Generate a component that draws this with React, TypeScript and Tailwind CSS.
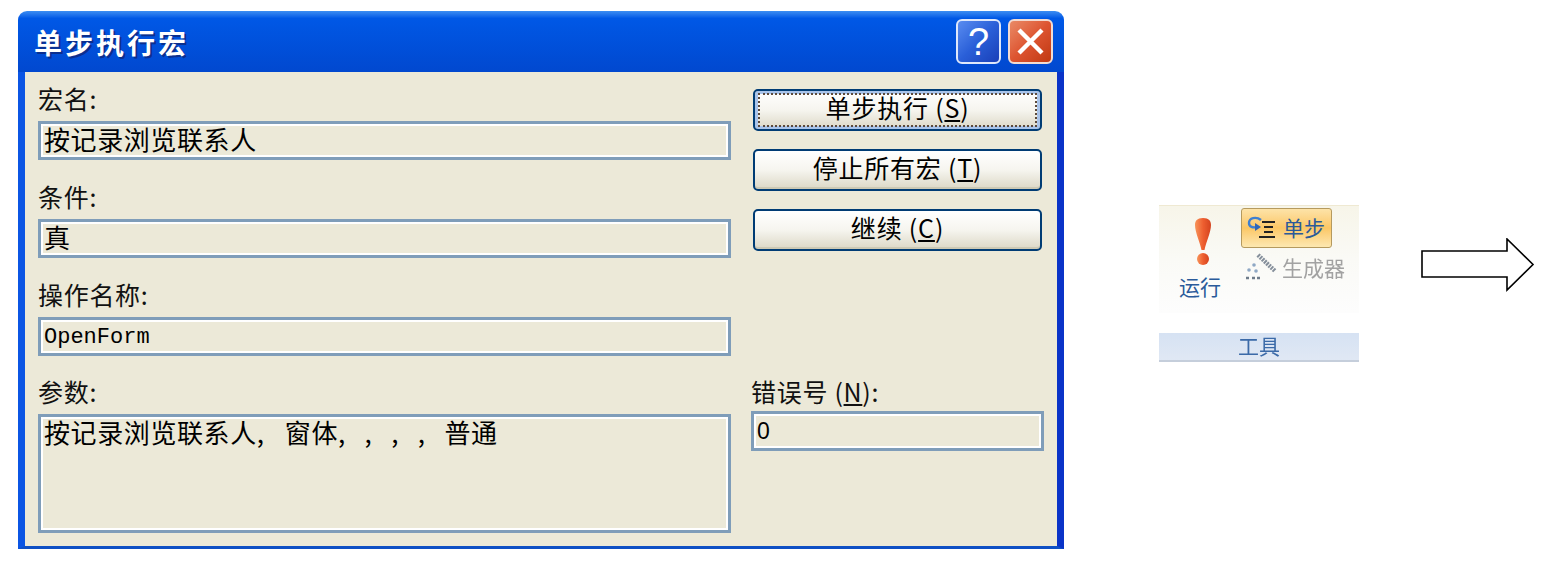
const cjk = "font-['Noto_Sans_CJK_SC','Liberation_Sans',sans-serif]";

function Field({ className, children }: { className: string; children: React.ReactNode }) {
  return (
    <div
      className={`border-[3px] border-[#7f9db9] bg-[#ece9d8] pl-[3px] text-[26px] leading-[30px] tracking-[0.6px] text-black shadow-[inset_0_0_0_2px_#fff] ${className}`}
    >
      {children}
    </div>
  );
}

function Label({ children }: { children: React.ReactNode }) {
  return <div className="h-[30px] text-[25px] leading-[26px] tracking-[0.7px] text-[#111]">{children}</div>;
}

function Sep({ width = "w-[26.6px]" }: { width?: string }) {
  return <span className={`inline-block ${width}`}>,</span>;
}

function DialogButton({ focused, children }: { focused?: boolean; children: React.ReactNode }) {
  return (
    <button
      type="button"
      className={`flex h-[42px] w-[289px] items-center justify-center rounded-[5px] border-2 border-[#003c74] bg-linear-to-b from-white via-[#f6f5ef] to-[#dcd8c6] text-[25px] leading-none tracking-[0.8px] text-black ${
        focused ? "shadow-[inset_0_0_0_3px_#a9c4ea]" : "shadow-[inset_0_-2px_0_#cdc9b4]"
      }`}
    >
      <span
        className={
          focused
            ? "flex h-[34px] w-[279px] items-center justify-center border-2 border-dotted border-[#5c4a3c] pb-[6px]"
            : "pb-[6px]"
        }
      >
        {children}
      </span>
    </button>
  );
}

function StepIcon() {
  return (
    <svg width="30" height="24" viewBox="0 0 30 24" fill="none">
      <path d="M14 4 C9 0 2 2 2 7 C2 11 6 12 10 11" stroke="#3f7fd0" strokeWidth="2.4" />
      <path d="M8 7 L14 11 L8 15 Z" fill="#2f66b8" />
      <path d="M15 6h13M17 11h9M17 16h9M12 21h16" stroke="#222" strokeWidth="2.2" />
    </svg>
  );
}

function BuilderIcon() {
  return (
    <svg width="32" height="28" viewBox="0 0 32 28" fill="none">
      <path d="M13 2 L30 18" stroke="#858f9b" strokeWidth="4.4" strokeDasharray="2 1" />
      <circle cx="9" cy="12" r="1.8" fill="#8fa8c4" />
      <circle cx="4" cy="17" r="1.8" fill="#8fa8c4" />
      <circle cx="11" cy="18" r="1.8" fill="#8fa8c4" />
      <path d="M1 25h3M7 25h3M12 25h3" stroke="#6f7c8a" strokeWidth="2.6" />
    </svg>
  );
}

function AlertIcon() {
  return (
    <svg className="ml-[6px]" width="20" height="48" viewBox="0 0 20 48" fill="none">
      <defs>
        <linearGradient id="alert" x1="0" y1="0" x2="1" y2="0">
          <stop offset="0" stopColor="#f7945a" />
          <stop offset="0.5" stopColor="#ee5f30" />
          <stop offset="1" stopColor="#d4431e" />
        </linearGradient>
      </defs>
      <path d="M10 0 C16 0 18 3 18 7 C18 14 13 24 11.5 32 H8.5 C7 24 2 14 2 7 C2 3 4 0 10 0 Z" fill="url(#alert)" />
      <circle cx="10" cy="41" r="6" fill="url(#alert)" />
    </svg>
  );
}

export default function App() {
  return (
    <div className={`flex h-[562px] w-[1556px] items-start overflow-hidden bg-white pt-[11px] pl-[18px] ${cjk}`}>
      <div className="flex h-[538px] w-[1046px] shrink-0 flex-col">
        <div className="flex h-[61px] items-center justify-between rounded-t-[9px] bg-linear-to-b from-[#3b8df2] via-[#0058e6] via-[12%] to-[#0148cf] pr-[11px] pl-[16px]">
          <span className="text-[28px] leading-none font-bold tracking-[3px] text-white [text-shadow:2px_2px_0_#0b2f8f]">
            单步执行宏
          </span>
          <div className="flex gap-[7px]">
            <div className="flex h-[45px] w-[45px] items-center justify-center rounded-[6px] border-2 border-[#dfe8fb] bg-linear-to-br from-[#5a8cf0] via-[#2a5fd8] to-[#1a3fb8] font-['Liberation_Sans',sans-serif] text-[38px] leading-none text-white">
              ?
            </div>
            <div className="flex h-[45px] w-[45px] items-center justify-center rounded-[6px] border-2 border-[#f3dcd2] bg-linear-to-br from-[#e98a66] via-[#dd5430] to-[#c03810]">
              <svg width="29" height="29" viewBox="0 0 29 29">
                <path d="M3 3 L26 26 M26 3 L3 26" stroke="#fff" strokeWidth="4.4" />
              </svg>
            </div>
          </div>
        </div>

        <div className="flex h-[477px] border-r-[7px] border-b-[3px] border-l-[7px] border-r-[#0a33c8] border-b-[#0f50c4] border-l-[#0b55e4] bg-[#ece9d8] pt-[13px] pl-[13px]">
          <div className="flex w-[693px] flex-col">
            <Label>宏名:</Label>
            <Field className="mt-[6px] h-[39px]">按记录浏览联系人</Field>
            <div className="mt-[23px]">
              <Label>条件:</Label>
            </div>
            <Field className="mt-[6px] h-[39px]">真</Field>
            <div className="mt-[23px]">
              <Label>操作名称:</Label>
            </div>
            <Field className="mt-[6px] h-[39px] pt-[3px] font-['Liberation_Mono',monospace] !text-[22px] !tracking-normal">
              OpenForm
            </Field>
            <div className="mt-[22px]">
              <Label>参数:</Label>
            </div>
            <Field className="mt-[6px] h-[119px]">
              按记录浏览联系人
              <Sep width="w-[28px]" />
              窗体
              <Sep />
              <Sep />
              <Sep />
              <Sep />
              普通
            </Field>
          </div>

          <div className="ml-[20px] flex w-[293px] flex-col pt-[4px]">
            <div className="ml-[2px] flex flex-col gap-[18px]">
              <DialogButton focused>
                单步执行 (<span className="underline">S</span>)
              </DialogButton>
              <DialogButton>
                停止所有宏 (<span className="underline">T</span>)
              </DialogButton>
              <DialogButton>
                继续 (<span className="underline">C</span>)
              </DialogButton>
            </div>
            <div className="mt-[127px]">
              <Label>
                错误号 (<span className="underline">N</span>):
              </Label>
            </div>
            <Field className="mt-[3px] h-[40px] pt-[2px] font-['Liberation_Sans',sans-serif] !text-[23px] !tracking-normal">
              0
            </Field>
          </div>
        </div>
      </div>

      <div className="mt-[194px] ml-[95px] w-[200px] shrink-0 blur-[0.4px]">
        <div className="flex h-[108px] border-t border-[#efe9d2] bg-linear-to-b from-[#f7f5e9] via-[#fafaf6] to-[#fdfdfd]">
          <div className="flex w-[82px] flex-col items-center pt-[12px]">
            <AlertIcon />
            <span className="mt-[7px] text-[21px] leading-[26px] text-[#2a5a9a]">运行</span>
          </div>
          <div className="flex flex-col pt-[2px]">
            <div className="flex h-[40px] w-[91px] items-center gap-[6px] rounded-[3px] border border-[#b59a5e] bg-linear-to-b from-[#fde3a8] via-[#fbc765] to-[#fde8b0] pl-[5px] text-[21px] leading-none text-[#2a5a9a]">
              <StepIcon />
              <span className="pb-[2px]">单步</span>
            </div>
            <div className="mt-[5px] flex items-center gap-[5px] pl-[4px] text-[21px] leading-none whitespace-nowrap text-[#a2a2a2]">
              <BuilderIcon />
              <span>生成器</span>
            </div>
          </div>
        </div>
        <div className="mt-[20px] flex h-[29px] items-center justify-center border-b-2 border-[#c5cedb] bg-linear-to-b from-[#d6e2f3] to-[#e0e8f4] pb-[3px] text-[21px] leading-none text-[#3b6aa8]">
          工具
        </div>
      </div>

      <svg className="mt-[227px] ml-[62px] shrink-0" width="114" height="54" viewBox="0 0 114 54" fill="none">
        <path d="M1 13 H86 V1 L112 26.5 L86 52 V39 H1 Z" stroke="#000" strokeWidth="1.6" fill="#fff" />
      </svg>
    </div>
  );
}
